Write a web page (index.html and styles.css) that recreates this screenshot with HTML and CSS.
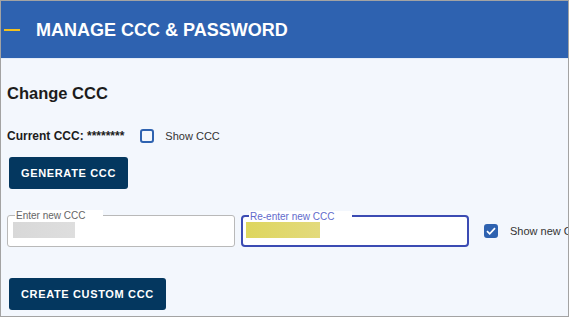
FILE: index.html
```html
<!DOCTYPE html>
<html lang="en">

<head>
    <meta charset="UTF-8">
    <meta name="viewport" content="width=device-width, initial-scale=1.0">
    <title>Manage CCC &amp; Password</title>
    <link rel="stylesheet" href="styles.css">
</head>

<body>
    <div class="page">
        <header class="topbar">
            <span class="dash"></span>
            <h1>MANAGE CCC &amp; PASSWORD</h1>
        </header>

        <div class="content">
            <h2>Change CCC</h2>

            <div class="current-row">
                <span class="current">Current CCC: ********</span>
                <label class="check">
                    <span class="box"></span>
                    <span>Show CCC</span>
                </label>
            </div>

            <button type="button" class="btn btn-generate">GENERATE CCC</button>

            <div class="field-row">
                <div class="field">
                    <span class="field-label">Enter new CCC</span>
                    <span class="mask mask-gray"></span>
                </div>
                <div class="field field-focus">
                    <span class="field-label">Re-enter new CCC</span>
                    <span class="mask mask-yellow"></span>
                </div>
                <label class="check check-new">
                    <span class="box box-checked">
                        <svg width="10" height="8" viewBox="0 0 10 8"><path d="M1 4.2 L3.7 6.8 L9 1.2" fill="none" stroke="#fff" stroke-width="1.7"/></svg>
                    </span>
                    <span>Show new CCC</span>
                </label>
            </div>

            <button type="button" class="btn btn-custom">CREATE CUSTOM CCC</button>
        </div>
    </div>
</body>

</html>
```

FILE: styles.css
```css
* {
    box-sizing: border-box;
    margin: 0;
    padding: 0;
}

body {
    font-family: "Liberation Sans", Arial, sans-serif;
    background-color: #ffffff;
}

.page {
    width: 569px;
    height: 317px;
    border: 1px solid #a3a3a3;
    background-color: #f3f7fd;
    overflow: hidden;
}

/* Blue title bar */
.topbar {
    height: 58px;
    background-color: #2e62b0;
    border-bottom: 1px solid #e4ecf8;
    display: flex;
    align-items: center;
}

.dash {
    width: 16px;
    height: 2px;
    margin-left: 3px;
    background-color: #f2c01e;
}

.topbar h1 {
    margin-left: 16px;
    color: #fff;
    font-size: 18px;
    line-height: 20px;
    font-weight: bold;
}

.content {
    padding: 0 6px;
}

h2 {
    margin-top: 24px;
    font-size: 16.5px;
    line-height: 20px;
    color: #1c1c1c;
}

.current-row {
    margin-top: 26px;
    display: flex;
    align-items: center;
    height: 14px;
}

.current {
    font-size: 12px;
    font-weight: bold;
    line-height: 14px;
    color: #1c1c1c;
}

.check {
    display: flex;
    flex-shrink: 0;
    align-items: center;
    font-size: 11px;
    color: #333;
    white-space: nowrap;
}

.current-row .check {
    margin-left: 16px;
}

.box {
    width: 14px;
    height: 14px;
    margin-right: 11px;
    border: 2px solid #2e62b0;
    border-radius: 3px;
    display: flex;
    align-items: center;
    justify-content: center;
}

.box-checked {
    background-color: #2e62b0;
    margin-right: 12px;
}

/* Dark buttons */
.btn {
    display: block;
    margin-left: 2px;
    padding: 0 12px;
    height: 32px;
    border: none;
    border-radius: 3px;
    background-color: #04375f;
    color: #fff;
    font-family: inherit;
    font-size: 11px;
    font-weight: bold;
    letter-spacing: 0.65px;
    cursor: pointer;
}

.btn-generate {
    margin-top: 14px;
}

.btn-custom {
    margin-top: 31px;
}

/* Outlined text fields */
.field-row {
    margin-top: 26px;
    display: flex;
    align-items: center;
}

.field {
    position: relative;
    flex-shrink: 0;
    width: 228px;
    height: 32px;
    padding: 6px 5px;
    background-color: #fff;
    border: 1px solid #b9b9b9;
    border-radius: 3px;
}

.field-focus {
    margin-left: 6px;
    padding: 5px 3px;
    border: 2px solid #3b4bb3;
    border-radius: 4px;
}

.field-label {
    position: absolute;
    top: -6px;
    left: 7px;
    padding: 0 18px 0 1px;
    background-color: #fff;
    font-size: 10px;
    line-height: 11px;
    color: #666;
}

.field-focus .field-label {
    left: 6px;
    color: #626bcc;
}

.mask {
    display: block;
    height: 16px;
}

.mask-gray {
    width: 62px;
    background: linear-gradient(to right, #d8d8d8, #dedede);
}

.mask-yellow {
    width: 74px;
    background: linear-gradient(to right, #ded65e, #e3da7c);
}

.check-new {
    margin-left: 15px;
}
```
